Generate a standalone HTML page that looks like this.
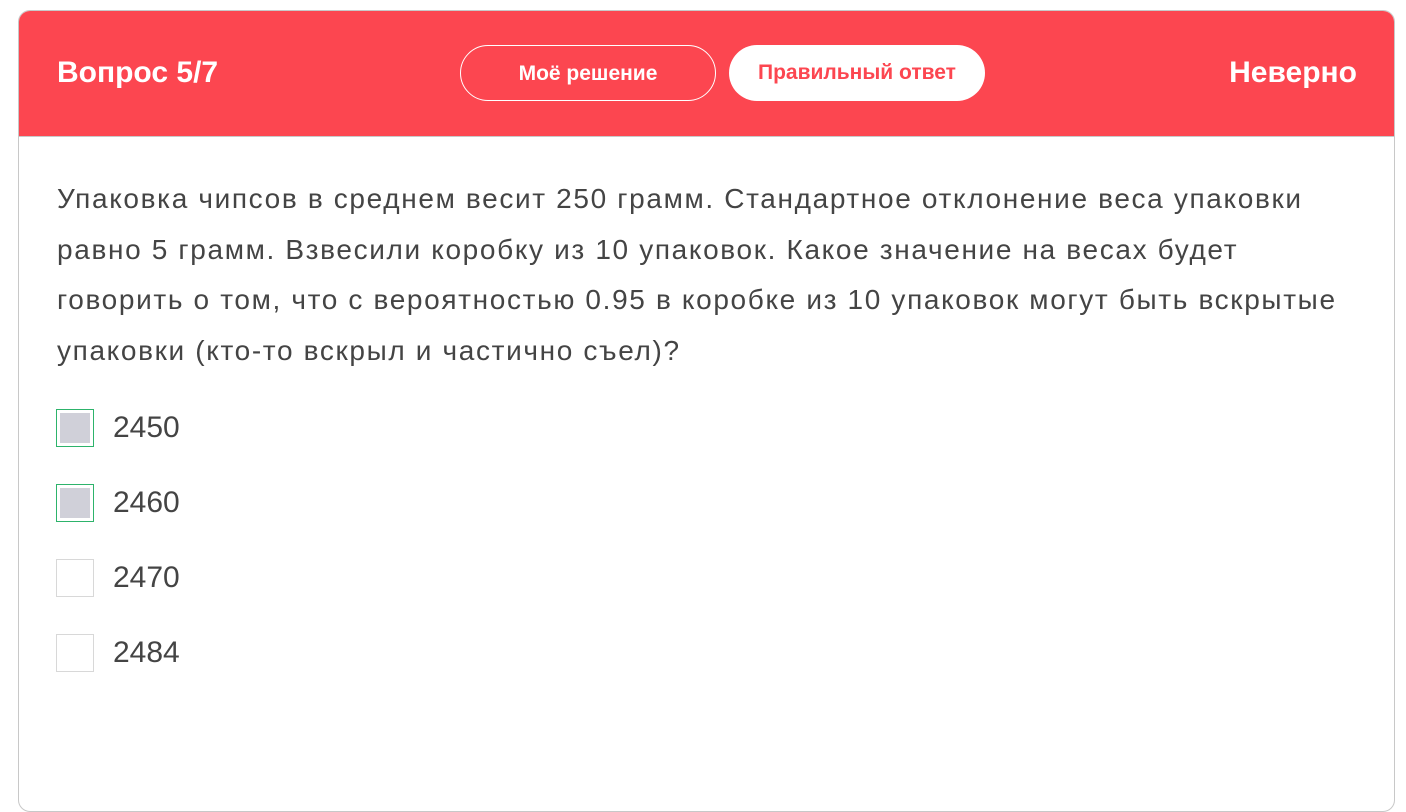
<!DOCTYPE html>
<html><head><meta charset="utf-8"><style>
body{margin:0;width:1406px;height:760px;background:#fff;font-family:"Liberation Sans",sans-serif;overflow:hidden;position:relative}
.card{position:absolute;left:18px;top:10px;width:1375px;height:800px;border:1px solid #c8c8c8;border-radius:12px;overflow:hidden}
.hdr{position:absolute;left:0;top:0;right:0;height:125px;background:#fc4650;border-bottom:1px solid #c8c8c8}
.t{position:absolute;color:#fff;font-weight:bold;font-size:30px;top:45px}
.b{position:absolute;top:34px;width:256px;height:56px;border-radius:28px;box-sizing:border-box;text-align:center;line-height:56px;font-size:21px;font-weight:bold}
.q{position:absolute;left:38px;top:163px;font-size:28px;letter-spacing:1.65px;line-height:50.5px;color:#444;white-space:nowrap}
.o{position:absolute;left:37px;width:38px;height:38px;box-sizing:border-box;border:1px solid #d8d8d8;background:#fff}
.o.c{border-color:#2db36b}.o.c::after{content:"";position:absolute;left:3px;top:3px;width:30px;height:30px;background:#d0d0d9}
.l{position:absolute;left:94px;font-size:30px;color:#444;line-height:38px}
</style></head><body>
<div class="card">
<div class="hdr">
<div class="t" style="left:38px">Вопрос 5/7</div>
<div class="b" style="left:441px;border:1px solid #fff;color:#fff">Моё решение</div>
<div class="b" style="left:710px;background:#fff;color:#fc4650">Правильный ответ</div>
<div class="t" style="right:37px">Неверно</div>
</div>
<div class="q">Упаковка чипсов в среднем весит 250 грамм. Стандартное отклонение веса упаковки<br>равно 5 грамм. Взвесили коробку из 10 упаковок. Какое значение на весах будет<br>говорить о том, что с вероятностью 0.95 в коробке из 10 упаковок могут быть вскрытые<br>упаковки (кто-то вскрыл и частично съел)?</div>
<div class="o c" style="top:398px"></div><div class="l" style="top:398px">2450</div>
<div class="o c" style="top:473px"></div><div class="l" style="top:473px">2460</div>
<div class="o" style="top:548px"></div><div class="l" style="top:548px">2470</div>
<div class="o" style="top:623px"></div><div class="l" style="top:623px">2484</div>
</div>
</body></html>
